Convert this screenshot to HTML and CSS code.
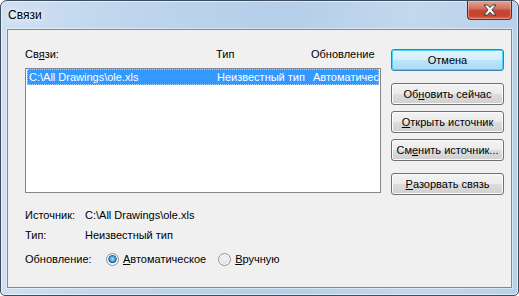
FILE: index.html
```html
<!DOCTYPE html>
<html lang="ru">
<head>
    <meta charset="UTF-8">
    <title>Связи</title>
    <link rel="stylesheet" href="styles.css">
</head>
<body>
    <div class="window">
        <div class="titlebar">
            <span class="title">Связи</span>
            <div class="close-btn">
                <svg width="14" height="12" viewBox="0 0 14 12">
                    <polygon points="1,1 4.5,1 7,3.6 9.5,1 13,1 9,5.8 13,11 9.5,11 7,8.2 4.5,11 1,11 5,5.8" fill="#fff" stroke="#3b3b3b" stroke-width="1" stroke-linejoin="round"/>
                </svg>
            </div>
        </div>
        <div class="client">
            <div class="left-col">
                <div class="list-head">
                    <span>Св<u>я</u>зи:</span>
                    <span>Тип</span>
                    <span>Обновление</span>
                </div>
                <div class="list">
                    <div class="list-row selected">
                        <span>C:\All Drawings\ole.xls</span>
                        <span>Неизвестный тип</span>
                        <span>Автоматическое</span>
                    </div>
                </div>
                <div class="info">
                    <div class="info-row">
                        <span class="info-label">Источник:</span>
                        <span>C:\All Drawings\ole.xls</span>
                    </div>
                    <div class="info-row second">
                        <span class="info-label">Тип:</span>
                        <span>Неизвестный тип</span>
                    </div>
                    <div class="update-row">
                        <span class="update-label">Обновление:</span>
                        <label class="radio first">
                            <span class="radio-circle checked"></span>
                            <span><u>А</u>втоматическое</span>
                        </label>
                        <label class="radio">
                            <span class="radio-circle"></span>
                            <span><u>В</u>ручную</span>
                        </label>
                    </div>
                </div>
            </div>
            <div class="buttons">
                <div class="btn default">Отмена</div>
                <div class="btn gap-big">Об<u>н</u>овить сейчас</div>
                <div class="btn gap-small"><u>О</u>ткрыть источник</div>
                <div class="btn gap-small">См<u>е</u>нить источник...</div>
                <div class="btn gap-big"><u>Р</u>азорвать связь</div>
            </div>
        </div>
    </div>
</body>
</html>
```

FILE: styles.css
```css
body {
    margin: 0;
    font-family: "Liberation Sans", Arial, sans-serif;
    font-size: 11px;
    line-height: 13px;
    color: #000;
    background: #fff;
}
u {
    text-decoration: underline;
    text-underline-offset: 1px;
}
.window {
    width: 519px;
    height: 296px;
    box-sizing: border-box;
    border: 1px solid #3d4c5e;
    border-radius: 7px 7px 5px 5px;
    padding: 0 6px 7px 6px;
    display: flex;
    flex-direction: column;
    background: linear-gradient(90deg, #cfe0f2 0%, #bed5ed 25%, #b5cee9 55%, #c3d8ee 80%, #b8d0ea 100%);
    box-shadow: inset 0 0 0 1px rgba(255, 255, 255, 0.55);
}
.titlebar {
    height: 28px;
    display: flex;
    justify-content: space-between;
    align-items: flex-start;
    flex-shrink: 0;
}
.title {
    margin-top: 7px;
    margin-left: 1px;
    font-size: 12px;
    line-height: 14px;
    text-shadow: 0 0 5px #fff, 0 0 8px #fff;
}
.close-btn {
    width: 45px;
    height: 19px;
    box-sizing: border-box;
    margin-right: 0;
    border: 1px solid #5b2b24;
    border-top: none;
    border-radius: 0 0 4px 4px;
    background: linear-gradient(#e1a294 0%, #d27663 40%, #c2432f 55%, #c84530 80%, #d9664a 100%);
    box-shadow: inset 0 0 0 1px rgba(255, 210, 200, 0.45);
    display: flex;
    align-items: center;
    justify-content: center;
}
.client {
    flex: 1;
    display: flex;
    gap: 10px;
    padding: 18px 0 0 17px;
    border: 1px solid #7b8a9a;
    background: #f0f0f0;
    box-shadow: 0 0 0 1px rgba(255, 255, 255, 0.45);
}
.left-col {
    width: 356px;
}
.list-head {
    display: grid;
    grid-template-columns: 191px 95px 1fr;
    white-space: nowrap;
}
.list {
    margin-top: 7px;
    height: 125px;
    box-sizing: border-box;
    border: 1px solid #828790;
    background: #fff;
    padding: 0 1px;
}
.list-row {
    display: grid;
    grid-template-columns: 188px 96px 1fr;
    height: 16px;
    line-height: 16px;
    white-space: nowrap;
    overflow: hidden;
}
.list-row span {
    padding-left: 2px;
    overflow: hidden;
}
.selected {
    background: #3399ff;
    color: #fff;
    outline: 1px dotted #a8d2ff;
    outline-offset: -1px;
}
.info {
    margin-top: 16px;
}
.info-row {
    display: grid;
    grid-template-columns: 60px 1fr;
}
.info-row.second {
    margin-top: 7px;
}
.update-row {
    margin-top: 10px;
    height: 14px;
    display: flex;
    align-items: center;
}
.update-label {
    width: 81px;
}
.radio {
    display: flex;
    align-items: center;
    gap: 4px;
}
.radio.first {
    margin-right: 12px;
}
.radio-circle {
    width: 13px;
    height: 13px;
    box-sizing: border-box;
    border-radius: 50%;
    border: 1px solid #8f9399;
    background: radial-gradient(circle at 50% 40%, #f4f4f4 0%, #e2e3e5 60%, #d1d3d6 100%);
    box-shadow: inset 0 0 0 1px #fafafa;
}
.radio-circle.checked {
    background: radial-gradient(circle at 50% 45%, #aee2ff 0%, #4aa5e4 28%, #1d5e93 48%, #e8e9eb 55%, #d4d6d9 100%);
}
.buttons {
    width: 113px;
    display: flex;
    flex-direction: column;
    padding-top: 1px;
}
.btn {
    height: 22px;
    box-sizing: border-box;
    border: 1px solid #707070;
    border-radius: 3px;
    background: linear-gradient(#f3f3f3 0%, #ebebeb 48%, #dddddd 52%, #cfcfcf 100%);
    box-shadow: inset 0 0 0 1px #fbfbfb;
    display: flex;
    align-items: center;
    justify-content: center;
    white-space: nowrap;
}
.btn.default {
    border-color: #3c7fb1;
    background: linear-gradient(#e6f5fd 0%, #d3eefc 48%, #bde4fb 52%, #a9daf6 100%);
    box-shadow: inset 0 0 0 1px #48d5fc;
}
.gap-big {
    margin-top: 12px;
}
.gap-small {
    margin-top: 6px;
}
```
